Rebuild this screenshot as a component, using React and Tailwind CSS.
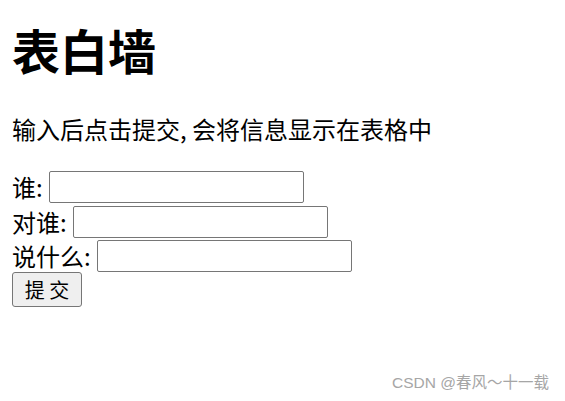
export default function App() {
  const font = { fontFamily: '"Noto Sans CJK SC", "Noto Sans", sans-serif' };
  return (
    <div className="relative w-[565px] h-[401px] bg-white text-black overflow-hidden" style={font}>
      <div className="px-[12px]">
        <h1 className="mt-[25px] text-[48px] leading-[48px] font-bold">表白墙</h1>
        <p className="mt-[44px] text-[24px] leading-[24px]">输入后点击提交, 会将信息显示在表格中</p>
        <div className="mt-[29px] text-[24px] leading-[24px]">
          <div className="flex items-center h-[34px]">
            <span className="whitespace-pre mr-[1px]">谁: </span>
            <input type="text" className="w-[255px] h-[32px] border border-[#767676] rounded-[2px] bg-white" />
          </div>
          <div className="flex items-center h-[35px]">
            <span className="whitespace-pre mr-[1px]">对谁: </span>
            <input type="text" className="w-[255px] h-[32px] border border-[#767676] rounded-[2px] bg-white" />
          </div>
          <div className="flex items-center h-[33px]">
            <span className="whitespace-pre mr-[1px]">说什么: </span>
            <input type="text" className="w-[255px] h-[32px] border border-[#767676] rounded-[2px] bg-white" />
          </div>
          <button className="w-[70px] h-[35px] border border-[#767676] rounded-[3px] bg-[#efefef] text-[20px] leading-[20px] flex items-center justify-center whitespace-pre">提 交</button>
        </div>
      </div>
      <div className="absolute right-[16px] top-[374px] text-[15.5px] leading-[18px] text-[#a6a6a6]" style={{ fontFamily: '"Liberation Sans", "Noto Sans CJK SC", sans-serif' }}>CSDN @春风～十一载</div>
    </div>
  );
}
